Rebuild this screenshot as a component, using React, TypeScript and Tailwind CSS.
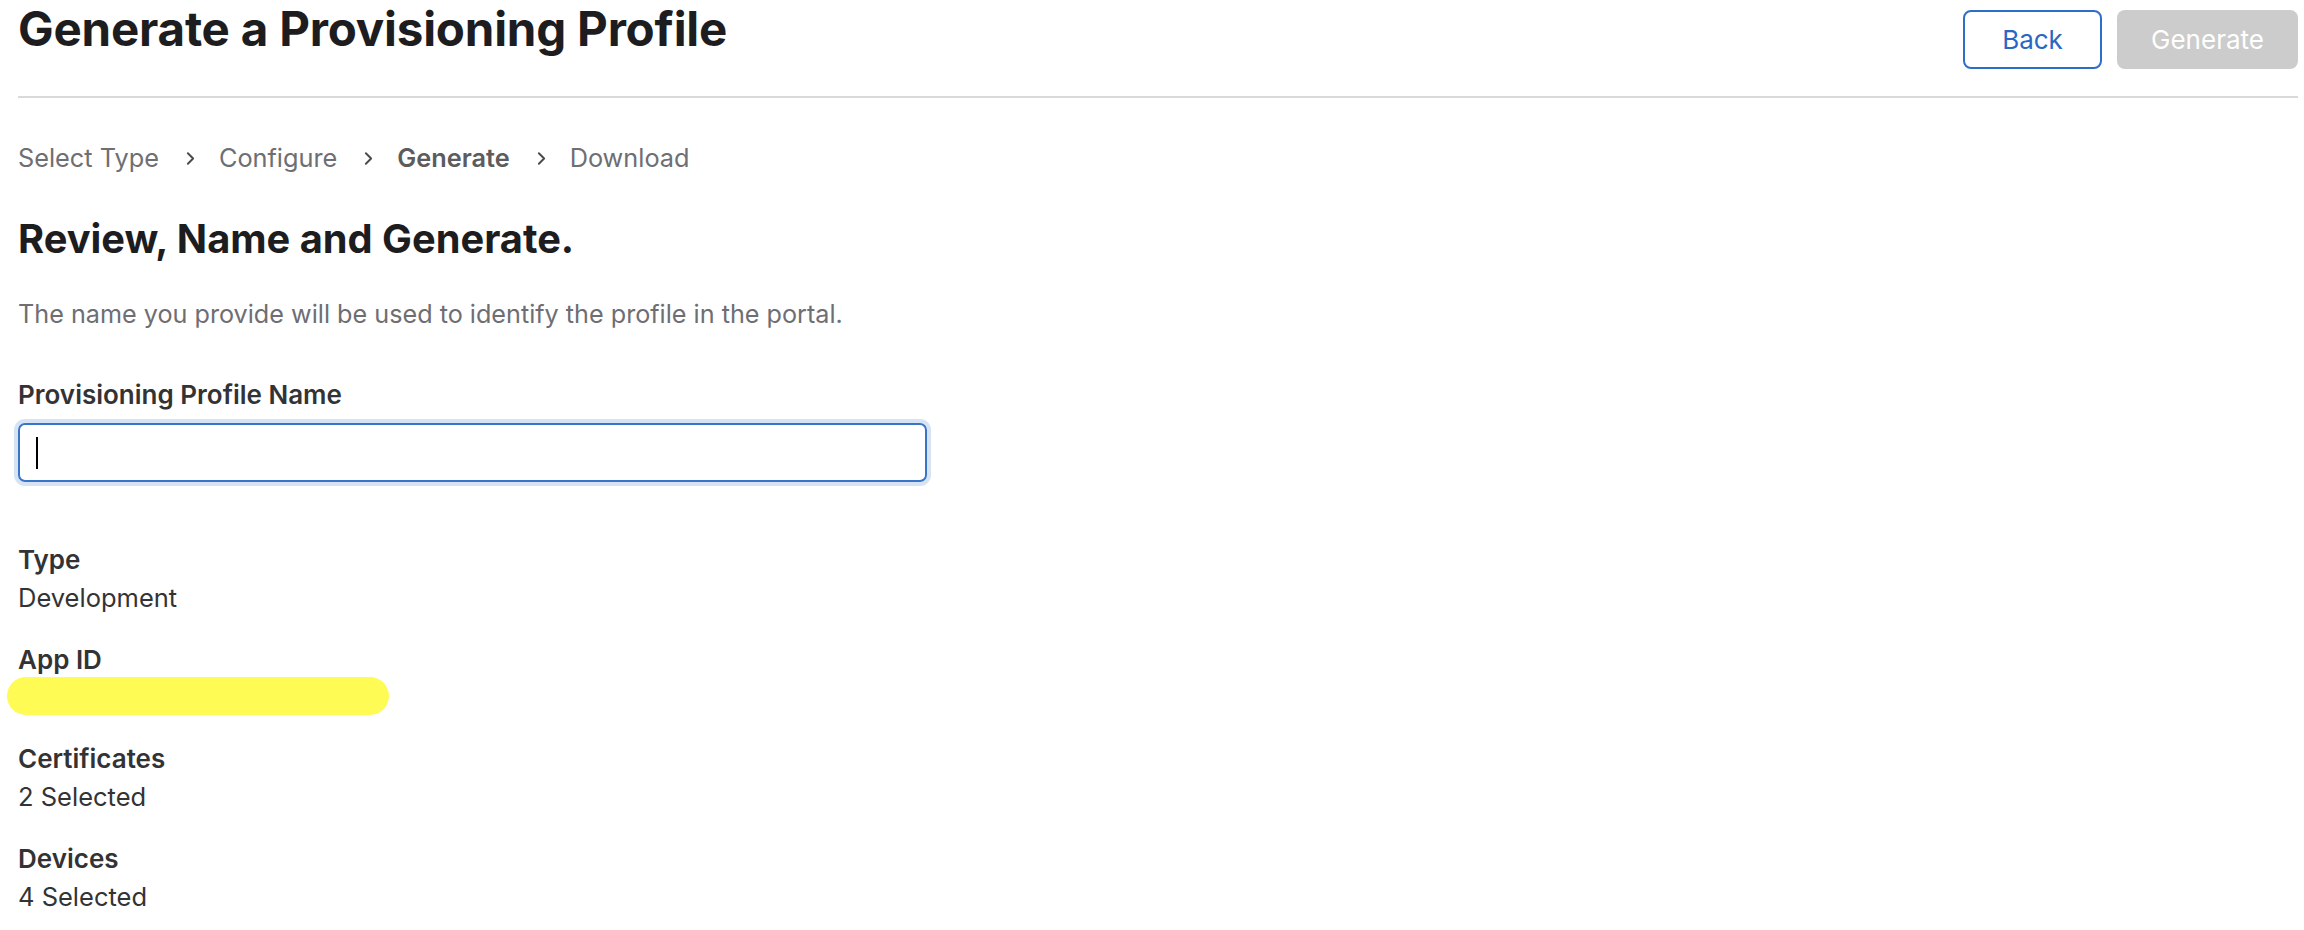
import { ChevronRight } from 'lucide-react'

const steps = [
  { label: 'Select Type', active: false },
  { label: 'Configure', active: false },
  { label: 'Generate', active: true },
  { label: 'Download', active: false },
]

function Field({ label, value }: { label: string; value: string }) {
  return (
    <div className="mb-[24px]">
      <p className="text-[26px] leading-[38px] font-semibold text-[#333336]">{label}</p>
      <p className="text-[25.5px] leading-[38px] text-[#333336]">{value}</p>
    </div>
  )
}

export default function App() {
  return (
    <div className="min-h-screen bg-white pl-[18px] pr-[6px] font-['Inter',sans-serif]">
      <div className="flex items-start justify-between h-[98px] border-b-2 border-[#d9d9d9]">
        <h1 className="text-[47.5px] leading-[58px] font-bold text-[#1d1d1f] tracking-[-0.2px]">
          Generate a Provisioning Profile
        </h1>
        <div className="flex gap-[15px] mt-[10px]">
          <button className="w-[139px] h-[59px] rounded-[8px] border-2 border-[#2f6ec8] text-[#2a67c2] text-[26px]">
            Back
          </button>
          <button className="w-[181px] h-[59px] rounded-[8px] bg-[#cccccc] text-white text-[26px]">
            Generate
          </button>
        </div>
      </div>

      <nav className="mt-[42px] flex items-center h-[36px] text-[25.3px] text-[#6e6e73]">
        {steps.map((s, i) => (
          <div key={s.label} className="flex items-center">
            <span className={s.active ? 'font-semibold text-[#5c5c60]' : ''}>{s.label}</span>
            {i < steps.length - 1 && (
              <ChevronRight size={21} strokeWidth={2.2} className="ml-[21px] mr-[18px] text-[#4a4a4e]" />
            )}
          </div>
        ))}
      </nav>

      <h2 className="mt-[41px] text-[39.8px] leading-[44px] font-bold text-[#1d1d1f]">
        Review, Name and Generate.
      </h2>

      <p className="mt-[35px] text-[25.2px] leading-[36px] text-[#6e6e73]">
        The name you provide will be used to identify the profile in the portal.
      </p>

      <label className="block mt-[45px] text-[26px] leading-[36px] font-semibold text-[#333336]">
        Provisioning Profile Name
      </label>
      <div className="mt-[10px] w-[909px] h-[59px] rounded-[7px] border-2 border-[#3874c8] ring-4 ring-[#d6e3f5] flex items-center px-[16px]">
        <div className="w-[2px] h-[32px] bg-black" />
      </div>

      <div className="mt-[59px]">
        <Field label="Type" value="Development" />
        <div className="mb-[25px]">
          <p className="text-[26px] leading-[38px] font-semibold text-[#333336]">App ID</p>
          <div className="-mt-[2px] -ml-[11px] w-[382px] h-[38px] rounded-full bg-[#fefb55]" />
        </div>
        <Field label="Certificates" value="2 Selected" />
        <Field label="Devices" value="4 Selected" />
      </div>
    </div>
  )
}
